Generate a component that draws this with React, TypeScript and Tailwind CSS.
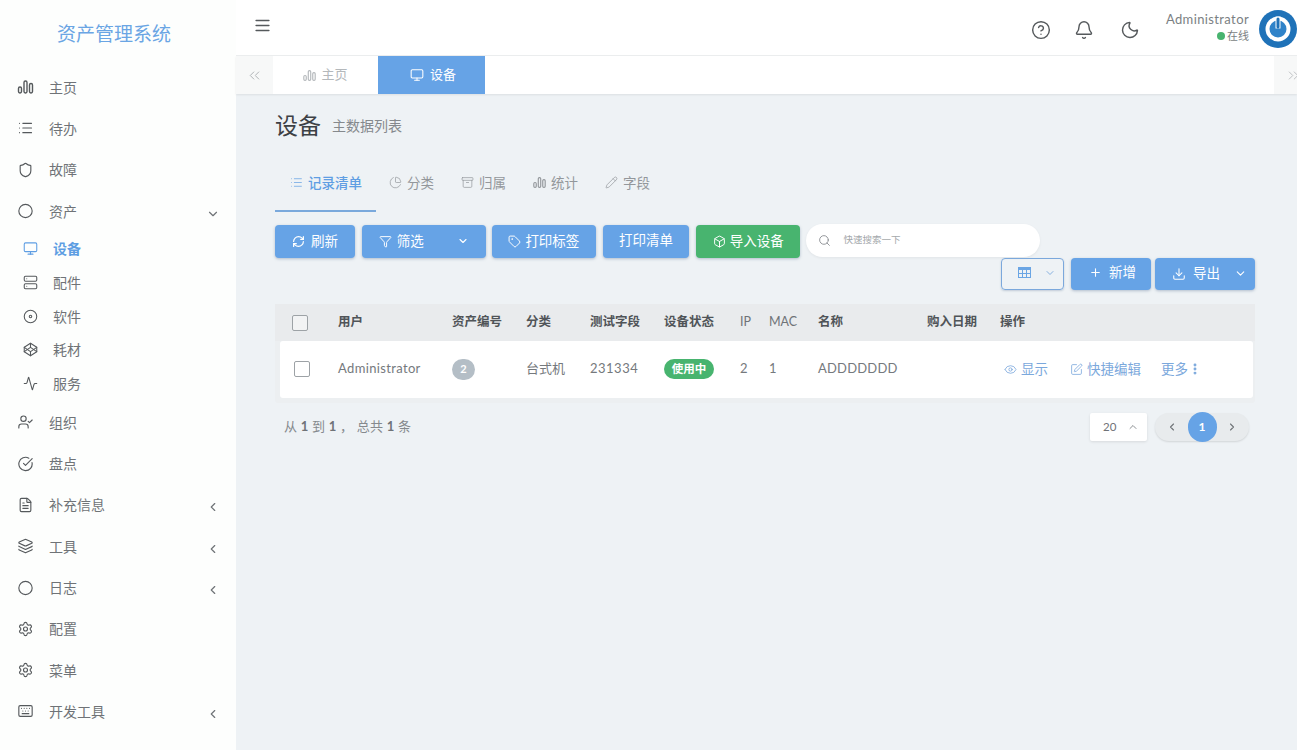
import React from 'react'
import {
  Activity, AlignJustify, Archive, Bell, Box, ChartPie, ChevronDown, ChevronLeft, ChevronRight, ChevronUp, ChevronsLeft, ChevronsRight,
  Circle, CircleCheckBig, CircleHelp, Codepen, Disc, Download, EllipsisVertical, Eye, FileText, Funnel, Keyboard, Layers, List, Monitor,
  Moon, Pencil, Plus, RefreshCw, Search, Server, Settings, Shield, SquarePen, Tag, UserCheck,
} from 'lucide-react'

const font = { fontFamily: 'Lato, "Noto Sans CJK SC", sans-serif' }

function Bars({ size = 16, className = '' }: any) {
  return (
    <svg width={size} height={size} viewBox="0 0 16 16" fill="none" stroke="currentColor" strokeWidth="1.4" className={className}>
      <rect x="1" y="8" width="3" height="6" rx="1.4" />
      <rect x="6.5" y="2" width="3" height="12" rx="1.4" />
      <rect x="12" y="4.5" width="3" height="9.5" rx="1.4" />
    </svg>
  )
}

function GridIcon() {
  return (
    <svg width="13" height="11" viewBox="0 0 13 11" fill="none" stroke="currentColor" strokeWidth="1">
      <rect x="0.5" y="0.5" width="12" height="10" />
      <path d="M0.5 2h12" strokeWidth="2" />
      <path d="M0.5 6.5h12M4.5 3v7.5M8.5 3v7.5" />
    </svg>
  )
}

function NavItem({ icon: Icon, label, arrow }: any) {
  return (
    <div className="h-[41.3px] flex items-center pl-[17px] pr-[16px] text-[14px] text-[#6f7377]">
      <Icon size={16} strokeWidth={1.7} className="w-[17px] text-[#55595c] shrink-0" />
      <span className="ml-[15px] flex-1">{label}</span>
      {arrow === 'left' && <ChevronLeft size={14} strokeWidth={2} className="mt-[5px] text-[#6f7377]" />}
      {arrow === 'down' && <ChevronDown size={14} strokeWidth={2} className="mt-[5px] text-[#6f7377]" />}
    </div>
  )
}

function SubItem({ icon: Icon, label, active }: any) {
  return (
    <div className={'h-[33.8px] flex items-center pl-[23px] text-[14px] ' + (active ? 'text-[#5f9ee3] font-bold' : 'text-[#6f7377]')}>
      <Icon size={15} strokeWidth={1.7} className={active ? 'text-[#5f9ee3]' : 'text-[#55595c]'} />
      <span className="ml-[15px]">{label}</span>
    </div>
  )
}

function Sidebar() {
  return (
    <div className="w-[236px] shrink-0 bg-[#fdfefd] min-h-[750px]">
      <div className="h-[66.5px] pl-[57px] pt-[21px] text-[19px] leading-[25px] text-[#6aa5e4]">资产管理系统</div>
      <NavItem icon={Bars} label="主页" />
      <NavItem icon={List} label="待办" />
      <NavItem icon={Shield} label="故障" />
      <NavItem icon={Circle} label="资产" arrow="down" />
      <SubItem icon={Monitor} label="设备" active />
      <SubItem icon={Server} label="配件" />
      <SubItem icon={Disc} label="软件" />
      <SubItem icon={Codepen} label="耗材" />
      <SubItem icon={Activity} label="服务" />
      <div className="h-[1px]" />
      <NavItem icon={UserCheck} label="组织" />
      <NavItem icon={CircleCheckBig} label="盘点" />
      <NavItem icon={FileText} label="补充信息" arrow="left" />
      <NavItem icon={Layers} label="工具" arrow="left" />
      <NavItem icon={Circle} label="日志" arrow="left" />
      <NavItem icon={Settings} label="配置" />
      <NavItem icon={Settings} label="菜单" />
      <NavItem icon={Keyboard} label="开发工具" arrow="left" />
    </div>
  )
}

function Avatar() {
  return (
    <svg width="38" height="38" viewBox="0 0 38 38" className="shrink-0">
      <circle cx="19" cy="19" r="19" fill="#1f72b8" />
      <circle cx="19" cy="19" r="12.5" fill="#ffffff" />
      <circle cx="19" cy="19" r="8.5" fill="#2f83c9" />
      <path d="M19 6.5v12" stroke="#ffffff" strokeWidth="5" />
      <path d="M19 9v8" stroke="#1f72b8" strokeWidth="3" strokeLinecap="round" />
    </svg>
  )
}

function Header() {
  return (
    <div className="h-[56px] bg-white border-b border-[#eceeef] flex items-center pl-[18px]">
      <AlignJustify size={17} strokeWidth={2.2} className="text-[#55595c] mb-[5px]" />
      <div className="flex-1" />
      <CircleHelp size={20} strokeWidth={1.7} className="text-[#55595c] mt-[5px]" />
      <Bell size={20} strokeWidth={1.7} className="text-[#55595c] ml-[23px] mt-[5px]" />
      <Moon size={20} strokeWidth={1.7} className="text-[#55595c] ml-[26px] mt-[5px]" />
      <div className="ml-[26px] mr-[10px] text-right">
        <div className="text-[13px] leading-[16px] tracking-[0.38px] text-[#7b7f83] mb-[1px]">Administrator</div>
        <div className="flex items-center justify-end text-[11px] leading-[16px] text-[#7b7f83]">
          <span className="w-[8px] h-[8px] rounded-full bg-[#48b46f] mr-[2px]" />
          在线
        </div>
      </div>
      <div className="mt-[2px]">
        <Avatar />
      </div>
    </div>
  )
}

function TabBar() {
  return (
    <div className="h-[38px] bg-white flex shadow-[0_1px_2px_rgba(0,0,0,0.08)] text-[13px]">
      <div className="w-[37px] bg-[#f7f8f8] flex items-center justify-center text-[#a9adb0]">
        <ChevronsLeft size={17} strokeWidth={1.3} />
      </div>
      <div className="w-[105px] flex items-center justify-center text-[#b4b8bb]">
        <Bars size={13} className="mr-[5px]" />
        主页
      </div>
      <div className="w-[107px] bg-[#66a3e6] text-white flex items-center justify-center pl-[3px]">
        <Monitor size={14} strokeWidth={1.8} className="mr-[6px]" />
        设备
      </div>
      <div className="flex-1" />
      <div className="w-[23px] bg-[#f7f8f8] flex items-center justify-end text-[#b9bdc0]">
        <ChevronsRight size={17} strokeWidth={1.3} className="-mr-[5px]" />
      </div>
    </div>
  )
}

function InnerTab({ icon: Icon, label, active }: any) {
  return (
    <div className={'h-[49px] pt-[10px] pr-[13.5px] flex items-start gap-[5px] text-[13.5px] leading-[20px] border-b-2 ' + (active ? 'pl-[15px] text-[#5f9ee3] font-medium border-[#7aa9dc]' : 'pl-[13.5px] text-[#93979b] border-transparent')}>
      <Icon size={13} strokeWidth={1.3} className="mt-[3px]" />
      {label}
    </div>
  )
}

function Btn({ children, className = '' }: any) {
  return (
    <div className={'h-[33px] rounded-[4px] text-white text-[13.5px] flex items-center shadow-[0_1px_3px_rgba(60,90,130,0.35)] ' + className}>
      {children}
    </div>
  )
}

const headCols = 'grid grid-cols-[63px_114px_74px_64px_74px_76px_29px_49px_109px_73px_1fr] items-center'
const rowCols = 'grid grid-cols-[58px_114px_74px_64px_74px_76px_29px_49px_109px_73px_1fr] items-center'

function CheckBox() {
  return <div className="ml-[17px] w-[16px] h-[16px] rounded-[2px] border border-[#9da2a6] bg-white/40" />
}

function DataTable() {
  return (
    <div className="mt-[14px] bg-[#eceff1] rounded-[3px] pb-[5px] pr-[2px]">
      <div className={headCols + ' h-[37px] bg-[#e9ebed] text-[12.5px] font-bold text-[#505458] -mr-[2px]'}>
        <CheckBox />
        <div>用户</div>
        <div>资产编号</div>
        <div>分类</div>
        <div>测试字段</div>
        <div>设备状态</div>
        <div className="font-normal text-[#6f7377]">IP</div>
        <div className="font-normal text-[#6f7377]">MAC</div>
        <div>名称</div>
        <div>购入日期</div>
        <div>操作</div>
      </div>
      <div className={rowCols + ' h-[57px] pb-[1px] bg-white ml-[5px] rounded-[3px] text-[13px] text-[#75797d]'}>
        <div className="-ml-[3px]">
          <CheckBox />
        </div>
        <div className="tracking-[0.35px]">Administrator</div>
        <div>
          <span className="w-[23px] h-[21px] rounded-full bg-[#b4bec6] text-white text-[11px] font-bold flex items-center justify-center">2</span>
        </div>
        <div>台式机</div>
        <div className="tracking-[0.5px]">231334</div>
        <div>
          <span className="w-[50px] h-[20px] rounded-full bg-[#48b46f] text-white text-[11.5px] font-bold flex items-center justify-center">使用中</span>
        </div>
        <div>2</div>
        <div>1</div>
        <div className="tracking-[0.2px]">ADDDDDDD</div>
        <div />
        <div className="flex items-center text-[13.5px] text-[#7ba8dc] pl-[4px]">
          <Eye size={13} strokeWidth={1.5} className="mr-[4px]" />
          显示
          <SquarePen size={13} strokeWidth={1.5} className="ml-[22px] mr-[4px]" />
          快捷编辑
          <span className="ml-[20px]">更多</span>
          <EllipsisVertical size={14} strokeWidth={3} />
        </div>
      </div>
    </div>
  )
}

function Footer() {
  return (
    <div className="mt-[10px] flex items-center pl-[9px] pr-[6px] text-[13px] text-[#85898d]">
      <div className="flex-1 tracking-[0.2px]">
        从 <b className="text-[#6f7377]">1</b> 到 <b className="text-[#6f7377]">1</b> ， 总共 <b className="text-[#6f7377]">1</b> 条
      </div>
      <div className="w-[57px] h-[28px] bg-white rounded-[2px] shadow-[0_1px_3px_rgba(0,0,0,0.1)] flex items-center justify-between pl-[13px] pr-[8px] text-[11.5px] text-[#6f7377]">
        20
        <ChevronUp size={12} strokeWidth={1.6} />
      </div>
      <div className="ml-[8px] w-[94px] h-[28px] rounded-full bg-[#e8ebed] shadow-[0_1px_2px_rgba(0,0,0,0.12)] flex items-center justify-between pl-[11px] pr-[11px] text-[#6f7377]">
        <ChevronLeft size={12} strokeWidth={2.2} />
        <span className="w-[29px] h-[30px] rounded-full bg-[#66a3e6] text-white text-[12px] font-bold flex items-center justify-center">1</span>
        <ChevronRight size={12} strokeWidth={2.2} />
      </div>
    </div>
  )
}

function Content() {
  return (
    <div className="pl-[39px] pr-[42px]">
      <div className="pt-[15px] h-[48px] flex items-center">
        <span className="text-[23px] text-[#3d4145]">设备</span>
        <span className="ml-[11px] text-[14px] text-[#85898d]">主数据列表</span>
      </div>
      <div className="mt-[21px] flex">
        <InnerTab icon={List} label="记录清单" active />
        <InnerTab icon={ChartPie} label="分类" />
        <InnerTab icon={Archive} label="归属" />
        <InnerTab icon={Bars} label="统计" />
        <InnerTab icon={Pencil} label="字段" />
      </div>
      <div className="mt-[13px] flex gap-[6.7px]">
        <Btn className="w-[80px] bg-[#66a3e6] pl-[17px] pb-[1px] gap-[6px]">
          <RefreshCw size={13} strokeWidth={2.2} />
          刷新
        </Btn>
        <Btn className="w-[124px] bg-[#66a3e6] pl-[17px] pr-[17px] pb-[1px] gap-[5px]">
          <Funnel size={13} strokeWidth={1.8} />
          <span className="flex-1">筛选</span>
          <ChevronDown size={12} strokeWidth={2.2} />
        </Btn>
        <Btn className="w-[104px] bg-[#66a3e6] pl-[16px] gap-[4px]">
          <Tag size={13} strokeWidth={1.8} />
          打印标签
        </Btn>
        <Btn className="w-[86px] bg-[#66a3e6] justify-center pb-[2px]">打印清单</Btn>
        <Btn className="w-[104px] bg-[#48b46f] pl-[17px] gap-[4px]">
          <Box size={13} strokeWidth={1.8} />
          导入设备
        </Btn>
        <div className="-mt-[1px] w-[233.5px] h-[33px] rounded-full bg-white shadow-[0_1px_3px_rgba(0,0,0,0.06)] flex items-center pl-[12px] text-[9.5px] text-[#a4a8ab]">
          <Search size={13} strokeWidth={1.6} className="text-[#85898d] mr-[12px]" />
          快速搜索一下
        </div>
      </div>
      <div className="flex justify-end">
        <div className="w-[63px] h-[32px] pb-[3px] rounded-[4px] border border-[#7ba8dc] flex items-center pl-[16px] gap-[13px] text-[#6aa5e4] shadow-[0_1px_2px_rgba(60,90,130,0.25)]">
          <GridIcon />
          <ChevronDown size={12} strokeWidth={1.8} className="text-[#7ba8dc]" />
        </div>
        <Btn className="ml-[7px] !h-[32px] w-[80px] bg-[#66a3e6] pl-[18px] pb-[4px] gap-[7px]">
          <Plus size={13} strokeWidth={2} />
          新增
        </Btn>
        <Btn className="ml-[4px] !h-[32px] w-[100px] bg-[#66a3e6] pl-[17px] pr-[8px] pb-[1px] gap-[7px]">
          <Download size={14} strokeWidth={1.8} />
          <span className="flex-1">导出</span>
          <ChevronDown size={13} strokeWidth={2} />
        </Btn>
      </div>
      <DataTable />
      <Footer />
    </div>
  )
}

export default function App() {
  return (
    <div className="flex w-[1297px] h-[750px] overflow-hidden bg-[#eef2f5]" style={font}>
      <Sidebar />
      <div className="flex-1 min-w-0">
        <Header />
        <TabBar />
        <Content />
      </div>
    </div>
  )
}
